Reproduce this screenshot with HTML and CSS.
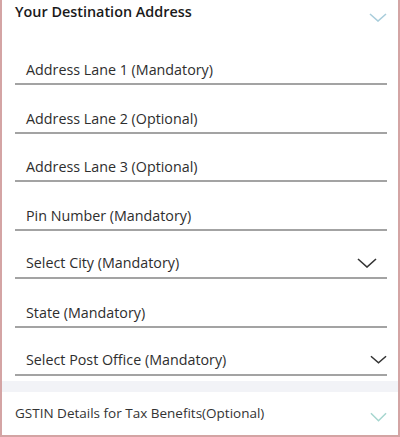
FILE: index.html
```html
<!DOCTYPE html>
<html>
<head>
<meta charset="utf-8">
<link rel="stylesheet" href="styles.css">
</head>
<body>
<div class="frame">
  <section class="panel">
    <div class="panel-head">
      <h2 class="title">Your Destination Address</h2>
      <svg class="chev chev-head" viewBox="0 0 18 9" width="18" height="9"><path d="M1 1 L9 8 L17 1" fill="none" stroke="#a9cddb" stroke-width="1.6"/></svg>
    </div>
    <div class="field"><span>Address Lane 1 (Mandatory)</span></div>
    <div class="field"><span>Address Lane 2 (Optional)</span></div>
    <div class="field"><span>Address Lane 3 (Optional)</span></div>
    <div class="field"><span>Pin Number (Mandatory)</span></div>
    <div class="field select city"><span>Select City (Mandatory)</span>
      <svg class="chev" viewBox="0 0 20 10" width="20" height="10"><path d="M1 1 L10 9 L19 1" fill="none" stroke="#333" stroke-width="1.6"/></svg>
    </div>
    <div class="field"><span>State (Mandatory)</span></div>
    <div class="field select post"><span>Select Post Office (Mandatory)</span>
      <svg class="chev" viewBox="0 0 18 9" width="17" height="9"><path d="M1 1 L9 8 L17 1" fill="none" stroke="#333" stroke-width="1.6"/></svg>
    </div>
  </section>
  <div class="band"></div>
  <section class="panel-head gst">
    <span class="gst-title">GSTIN Details for Tax Benefits(Optional)</span>
    <svg class="chev" viewBox="0 0 18 10" width="17" height="10"><path d="M1 1 L9 9 L17 1" fill="none" stroke="#a6d6cf" stroke-width="1.6"/></svg>
  </section>
</div>
</body>
</html>
```

FILE: styles.css
```css
html, body {
  margin: 0;
  padding: 0;
  background: #ffffff;
}

.frame {
  box-sizing: border-box;
  width: 400px;
  height: 437px;
  border-left: 2px solid #d4a4a4;
  border-right: 2px solid #d4a4a4;
  border-bottom: 2px solid #d4a4a4;
  font-family: "Open Sans", "Noto Sans", sans-serif;
  color: #2e2e2e;
  overflow: hidden;
}

.panel {
  padding: 0 11px 0 13px;
}

.panel-head {
  display: flex;
  align-items: flex-start;
  justify-content: space-between;
  height: 36.5px;
}

.title {
  margin: 0;
  padding-top: 2px;
  font-size: 14.4px;
  line-height: 20px;
  font-weight: 600;
  color: #1a1a1a;
}

.chev-head {
  margin-top: 13px;
  margin-right: 0;
}

.field {
  box-sizing: border-box;
  height: 48.5px;
  display: flex;
  align-items: flex-end;
  justify-content: space-between;
  padding: 0 0 3px 11px;
  border-bottom: 2px solid #a3a3a3;
  font-size: 14.3px;
  line-height: 20px;
  color: #2e2e2e;
}

.field.select {
  align-items: center;
  padding-top: 21px;
}

.field.city .chev {
  margin-right: 10px;
  margin-top: 0;
}

.field.post .chev {
  margin-right: 0;
}

.band {
  height: 11px;
  margin-top: 5px;
  background: #f2f3f7;
}

.gst {
  padding: 11px 11px 0 13px;
  align-items: center;
  height: auto;
}

.gst-title {
  font-size: 13.5px;
  line-height: 20px;
  color: #333333;
}

.gst .chev {
  margin-top: 8px;
}
```
